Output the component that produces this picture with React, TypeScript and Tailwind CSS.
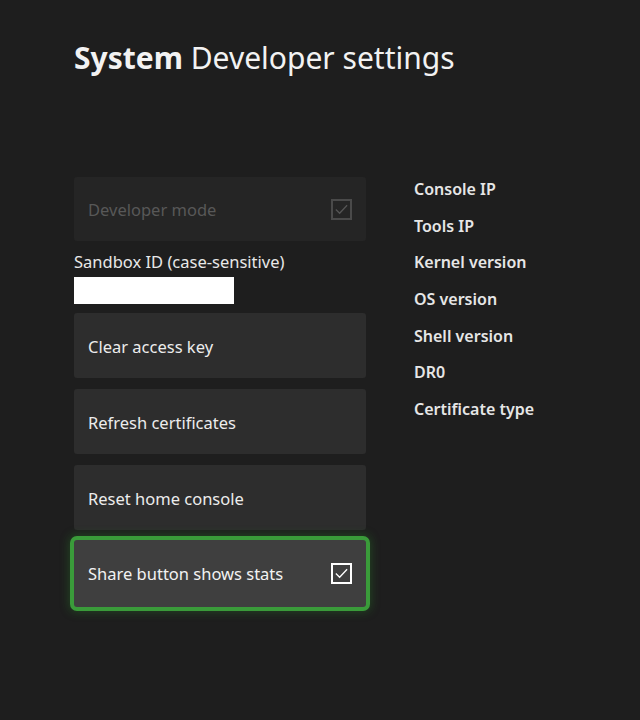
import React from "react"

const font = { fontFamily: '"Noto Sans", "Open Sans", sans-serif' }

function Check({ dim }: { dim?: boolean }) {
  return (
    <div
      className={`flex h-[21px] w-[21px] items-center justify-center border-2 ${
        dim ? "border-[#4a4a4a]" : "border-white"
      }`}
    >
      <svg width="15" height="15" viewBox="0 0 16 16" fill="none">
        <path
          d="M2.5 8.5 L6 12 L13.5 4"
          stroke={dim ? "#555555" : "#ffffff"}
          strokeWidth="1.4"
          strokeLinecap="square"
        />
      </svg>
    </div>
  )
}

export default function App() {
  const info = ["Console IP", "Tools IP", "Kernel version", "OS version", "Shell version", "DR0", "Certificate type"]

  return (
    <div className="min-h-[720px] w-[640px] bg-[#1e1e1e] pl-[74px] pt-[38px] text-white" style={font}>
      {/* Header */}
      <h1 className="text-[30px] leading-[40px] text-[#f2f2f2]">
        <span className="font-bold">System</span> <span className="font-normal">Developer settings</span>
      </h1>

      <div className="mt-[99px] flex gap-[48px]">
        {/* Left column */}
        <div className="flex w-[292px] flex-col">
          <div className="flex h-[64px] items-center justify-between rounded-[3px] bg-[#252525] pl-[14px] pr-[14px]">
            <span className="pt-[2px] text-[16.5px] text-[#585858]">Developer mode</span>
            <Check dim />
          </div>

          <div className="mt-[10px] text-[16.5px] leading-[22px] text-[#e8e8e8]">Sandbox ID (case-sensitive)</div>
          <div className="mt-[4px] h-[27px] w-[160px] bg-white" />

          <div className="mt-[9px] flex flex-col gap-[11px]">
            {["Clear access key", "Refresh certificates", "Reset home console"].map((t) => (
              <div key={t} className="flex h-[65px] items-center rounded-[3px] bg-[#2d2d2d] pl-[14px]">
                <span className="pt-[3px] text-[16.5px] text-[#ececec]">{t}</span>
              </div>
            ))}
          </div>

          <div className="mt-[10px] flex h-[67px] items-center justify-between rounded-[3px] bg-[#3f3f3f] pl-[14px] pr-[14px] shadow-[0_0_0_4px_#3a9b3a,0_0_10px_5px_rgba(40,140,40,0.35)]">
            <span className="pt-[2px] text-[16.5px] text-[#f2f2f2]">Share button shows stats</span>
            <Check />
          </div>
        </div>

        {/* Right column */}
        <div className="flex flex-col gap-[12.66px]">
          {info.map((t) => (
            <div key={t} className="text-[16px] font-semibold leading-[24px] text-[#e6e6e6]">
              {t}
            </div>
          ))}
        </div>
      </div>
    </div>
  )
}
